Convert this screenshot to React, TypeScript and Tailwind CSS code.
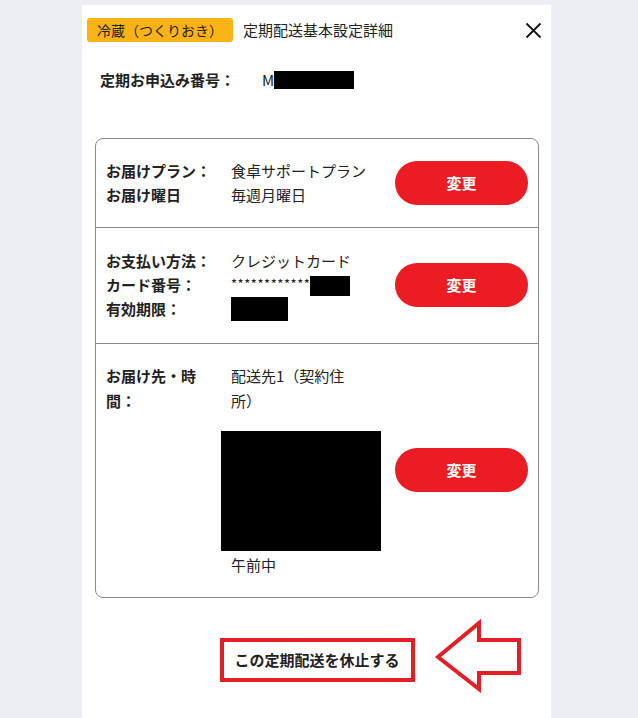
import React from "react";

function Row({ label, children }: { label: React.ReactNode; children: React.ReactNode }) {
  return (
    <div className="flex">
      <div className="w-[110px] mr-[15px] font-bold shrink-0">{label}</div>
      <div className="w-[140px]">{children}</div>
    </div>
  );
}

function ChangeButton() {
  return (
    <button className="ml-auto w-[133px] h-[44px] rounded-full bg-[#ec1c24] text-white font-bold text-[15px] flex items-center justify-center shrink-0">
      変更
    </button>
  );
}

export default function App() {
  return (
    <div className="min-h-[718px] bg-[#eceef4] font-['Noto_Sans_CJK_JP',sans-serif] text-[#222] text-[15px] leading-[24px] pt-[5px] overflow-hidden">
      <div className="ml-[82px] w-[469px] bg-white min-h-[713px] pt-[13px]">
        {/* header */}
        <div className="flex items-center pl-[5px] pr-[9px] h-[24px]">
          <span className="bg-[#fcb316] rounded-[3px] h-[24px] px-[10px] flex items-center text-[14px]">
            冷蔵（つくりおき）
          </span>
          <span className="ml-[10px] text-[15px]">定期配送基本設定詳細</span>
          <svg className="ml-auto" width="17" height="17" viewBox="0 0 17 17">
            <path d="M1.5 1.5 L15.5 15.5 M15.5 1.5 L1.5 15.5" stroke="#111" strokeWidth="1.8" />
          </svg>
        </div>

        {/* order number */}
        <div className="flex pl-[18px] mt-[26px]">
          <span className="w-[162px] font-bold">定期お申込み番号：</span>
          <span className="flex items-center">
            M<span className="inline-block w-[80px] h-[18px] bg-black" />
          </span>
        </div>

        {/* card */}
        <div className="mx-[13px] mr-[12px] mt-[46px] border border-[#8a8a8a] rounded-[8px]">
          <div className="flex items-center px-[10px] py-[20px] border-b border-[#8a8a8a]">
            <div>
              <Row label="お届けプラン：">食卓サポートプラン</Row>
              <Row label="お届け曜日">毎週月曜日</Row>
            </div>
            <ChangeButton />
          </div>

          <div className="flex items-center px-[10px] pt-[21px] pb-[22px] border-b border-[#8a8a8a]">
            <div>
              <Row label="お支払い方法：">クレジットカード</Row>
              <Row label="カード番号：">
                <span className="flex items-center h-[24px]">
                  <span className="text-[13px] tracking-[0.55px] leading-[13px] mt-[-4px]">************</span>
                  <span className="inline-block w-[40px] h-[20px] bg-black mt-[2px]" />
                </span>
              </Row>
              <Row label="有効期限：">
                <span className="flex items-center h-[24px]">
                  <span className="inline-block w-[57px] h-[24px] bg-black" />
                </span>
              </Row>
            </div>
            <ChangeButton />
          </div>

          <div className="flex items-center px-[10px] pt-[19px] pb-[20px]">
            <div className="flex">
              <div className="w-[110px] mr-[15px] font-bold shrink-0 leading-[25px]">
                お届け先・時
                <br />
                間：
              </div>
              <div className="w-[150px]">
                <div className="leading-[25px]">
                  配送先1（契約住
                  <br />
                  所）
                </div>
                <div className="w-[160px] h-[120px] bg-black mt-[18px] ml-[-10px]" />
                <div className="mt-[2px]">午前中</div>
              </div>
            </div>
            <ChangeButton />
          </div>
        </div>

        {/* suspend */}
        <div className="relative mt-[40px] flex justify-center pl-[1px]">
          <div className="w-[195px] h-[44px] border-[4px] border-[#e41e26] flex items-center justify-center font-bold text-[15px]">
            この定期配送を休止する
          </div>
          <svg
            className="absolute left-[352px] top-[-19px]"
            width="90"
            height="74"
            viewBox="0 0 90 74"
          >
            <polygon
              points="4,38 45,4 45,21 85,21 85,54 45,54 45,70"
              fill="none"
              stroke="#e41e26"
              strokeWidth="4"
              strokeLinejoin="miter"
            />
          </svg>
        </div>
      </div>
    </div>
  );
}
